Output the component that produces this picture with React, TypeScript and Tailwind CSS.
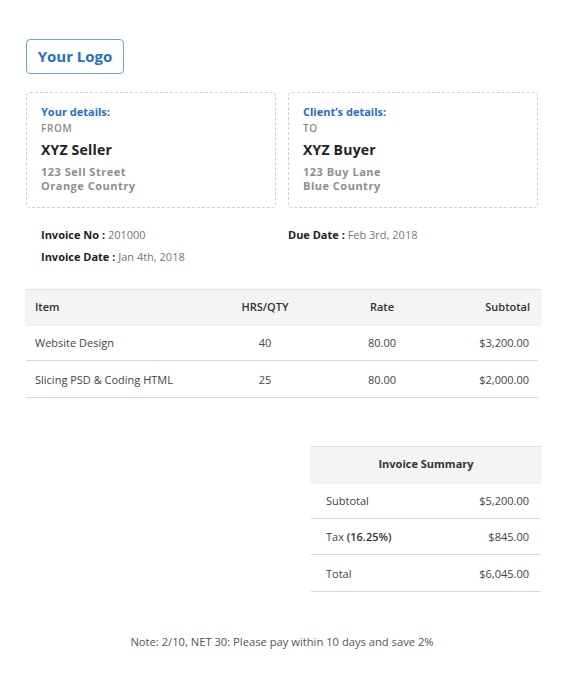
import React from "react";

const font = { fontFamily: '"Open Sans", "Liberation Sans", sans-serif' };

function DetailCard({ title, label, name, lines }: { title: string; label: string; name: string; lines: string[] }) {
  return (
    <div className="h-[116px] w-[250px] rounded-[4px] border border-dashed border-[#cfcfcf] px-[14px] pt-[11px]">
      <div className="text-[11px] font-bold leading-[16px] text-[#1e6fd0]">{title}</div>
      <div className="mt-[1px] text-[10px] font-semibold leading-[15px] tracking-[0.6px] text-[#8a8a8a]">{label}</div>
      <div className="mt-[4px] text-[14px] font-bold leading-[20px] tracking-[0.2px] text-[#222]">{name}</div>
      <div className="mt-[5px] text-[11px] font-bold leading-[14px] tracking-[0.5px] text-[#8e8e8e]">
        {lines.map((l) => (
          <div key={l}>{l}</div>
        ))}
      </div>
    </div>
  );
}

const rows = [
  { item: "Website Design", qty: "40", rate: "80.00", sub: "$3,200.00" },
  { item: "Slicing PSD & Coding HTML", qty: "25", rate: "80.00", sub: "$2,000.00" },
];

export default function App() {
  return (
    <div className="min-h-[693px] w-[564px] bg-white" style={font}>
      <div className="px-[26px] pt-[39px]">
        <div className="flex h-[35px] w-[98px] items-center justify-center rounded-[4px] border border-[#6aa3e6] text-[15px] font-bold text-[#1e6fd0]">
          Your Logo
        </div>

        <div className="mt-[18px] flex gap-[12px]">
          <DetailCard title="Your details:" label="FROM" name="XYZ Seller" lines={["123 Sell Street", "Orange Country"]} />
          <DetailCard title="Client’s details:" label="TO" name="XYZ Buyer" lines={["123 Buy Lane", "Blue Country"]} />
        </div>

        <div className="mt-[19px] grid grid-cols-[247px_1fr] gap-y-[6px] pl-[15px] text-[11px] leading-[16px]">
          <div>
            <span className="font-bold text-[#222]">Invoice No : </span>
            <span className="text-[#777]">201000</span>
          </div>
          <div>
            <span className="font-bold text-[#222]">Due Date : </span>
            <span className="text-[#777]">Feb 3rd, 2018</span>
          </div>
          <div>
            <span className="font-bold text-[#222]">Invoice Date : </span>
            <span className="text-[#777]">Jan 4th, 2018</span>
          </div>
        </div>

        <div className="mt-[24px] w-[514px]">
          <div className="grid h-[35px] w-[515px] grid-cols-[190px_98px_136px_91px] items-center border-t border-[#e2e2e2] bg-[#f4f4f4] text-[11px] font-semibold text-[#333] shadow-[0_1px_2px_rgba(0,0,0,0.12)]">
            <div className="pl-[9px]">Item</div>
            <div className="text-center">HRS/QTY</div>
            <div className="text-center">Rate</div>
            <div className="pr-[11px] text-right">Subtotal</div>
          </div>
          {rows.map((r) => (
            <div
              key={r.item}
              className="grid h-[37px] w-[512px] grid-cols-[190px_98px_136px_88px] items-center border-b border-[#d8d8d8] pt-[2px] text-[11px] text-[#444]"
            >
              <div className="pl-[9px]">{r.item}</div>
              <div className="text-center">{r.qty}</div>
              <div className="text-center">{r.rate}</div>
              <div className="pr-[9px] text-right">{r.sub}</div>
            </div>
          ))}
        </div>

        <div className="ml-[285px] mt-[48px] w-[229px]">
          <div className="flex h-[36px] w-[230px] items-center justify-center border-t border-[#e2e2e2] bg-[#f4f4f4] text-[11px] font-bold text-[#333] shadow-[0_1px_2px_rgba(0,0,0,0.12)]">
            Invoice Summary
          </div>
          <div className="flex h-[37px] items-center justify-between border-b border-[#d8d8d8] px-[15px] pt-[2px] pr-[11px] text-[11px] text-[#444]">
            <span>Subtotal</span>
            <span>$5,200.00</span>
          </div>
          <div className="flex h-[36px] items-center justify-between border-b border-[#d8d8d8] px-[15px] pt-[2px] pr-[11px] text-[11px] text-[#444]">
            <span>
              Tax <span className="font-semibold text-[#333]">(16.25%)</span>
            </span>
            <span>$845.00</span>
          </div>
          <div className="flex h-[37px] items-center justify-between border-b border-[#d8d8d8] px-[15px] pt-[2px] pr-[11px] text-[11px] text-[#444]">
            <span>Total</span>
            <span>$6,045.00</span>
          </div>
        </div>

        <div className="mt-[42px] w-[512px] text-center text-[11.2px] text-[#555]">
          Note: 2/10, NET 30: Please pay within 10 days and save 2%
        </div>
      </div>
    </div>
  );
}
